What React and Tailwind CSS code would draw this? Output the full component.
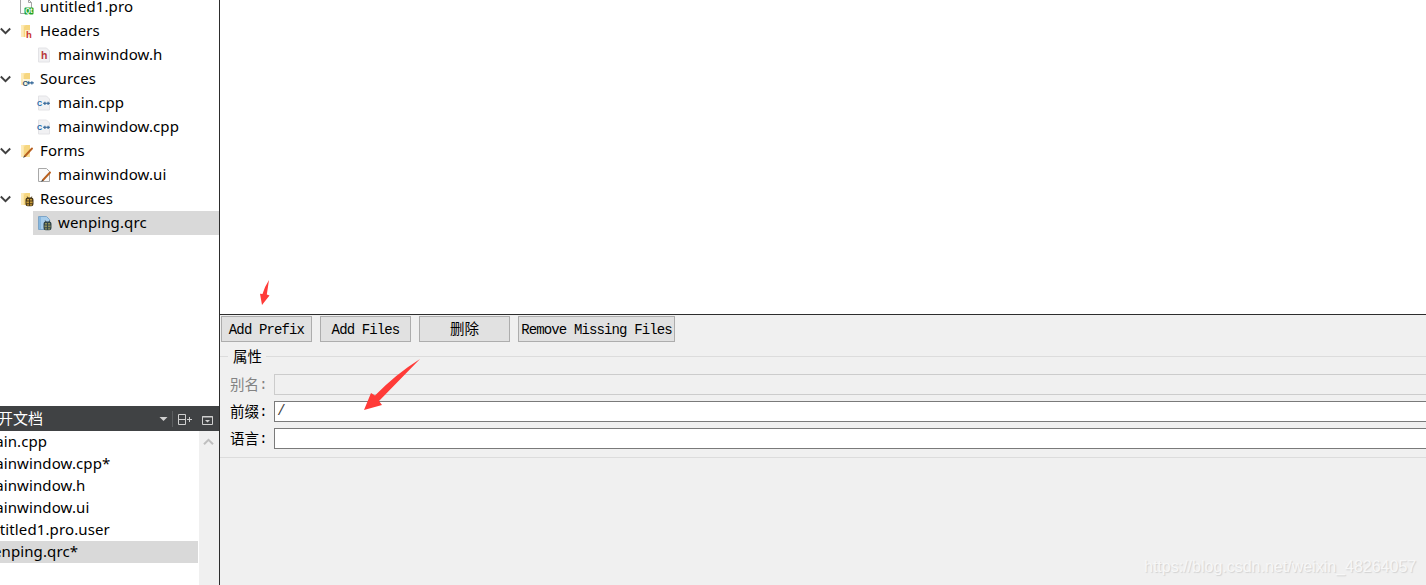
const folderBase = (
  <>
    <path d="M3 2h9v12H3z" fill="#fbe09a" />
    <path d="M3 2h2.5v12H3z" fill="#fdebb9" />
    <path d="M8 2h4v8l-4 4H6V4z" fill="#f6d67f" />
  </>
);

const pageBase = (
  <path d="M2.5 1h8l3 3v11h-11z" fill="#f1f1f3" stroke="#e3e3e6" />
);

const Globe = ({ dark, light }) => (
  <g>
    <path d="M10 7L9.3 5.6M13 7l.7-1.4" stroke={dark} />
    <rect x="7.5" y="6.5" width="8" height="8.7" rx="2.2" fill={dark} />
    <path d="M9 8h2v1.5H9zM12 8h2v1.5h-2zM8.5 10.5H11V12.2H8.5zM12 10.5h2.5v1.7H12zM9 13.2h2v1.2H9zM12 13.2h2v1.2h-2z" fill={light} />
  </g>
);

const Pencil = () => (
  <g fill="none" strokeLinecap="round">
    <path d="M7 13L14 5.5" stroke="#b8601f" strokeWidth="1.9" />
    <path d="M5.8 14.2l.9-.9" stroke="#4b4b4b" strokeWidth="1.1" />
  </g>
);

const Plusses = ({ x, y }) => (
  <path
    d={`M${x} ${y}h7M${x + 1.9} ${y - 1.6}v3.2M${x + 5.1} ${y - 1.6}v3.2`}
    stroke="#2a6094"
    strokeWidth="1.1"
    fill="none"
  />
);

const icons = {
  pro: (
    <>
      <path d="M2.5 .5h8l3 3v11h-11z" fill="#fcfcfc" stroke="#a5a5a5" />
      <path d="M10.5 .5v3h3" fill="none" stroke="#a5a5a5" />
      <rect x="6.5" y="8.5" width="9" height="7" rx="1" fill="#21a62c" />
      <text x="7.2" y="14" className="font-['Liberation_Sans'] text-[6.5px] font-bold" fill="#fff">Qt</text>
    </>
  ),
  headers: (
    <>
      {folderBase}
      <path d="M7 7h5v8H7z" fill="#fff" opacity="0.6" />
      <text x="8" y="14.5" className="font-['Liberation_Sans'] text-[9.5px] font-bold" fill="#cc3630">h</text>
    </>
  ),
  h: (
    <>
      {pageBase}
      <text x="5" y="12" className="font-['Liberation_Sans'] text-[10.5px] font-bold" fill="#b8353a">h</text>
    </>
  ),
  sources: (
    <>
      {folderBase}
      <path d="M5 8h7v7H5z" fill="#fff" opacity="0.7" />
      <text x="4.5" y="14.5" className="font-['Liberation_Sans'] text-[7.5px] font-bold" fill="#2e536f">C</text>
      <Plusses x={8.8} y={11.9} />
    </>
  ),
  cpp: (
    <>
      {pageBase}
      <text x="1" y="10.7" className="font-['Liberation_Sans'] text-[7px] font-bold" fill="#2169ab">C</text>
      <Plusses x={7} y={8.3} />
    </>
  ),
  forms: (
    <>
      {folderBase}
      <Pencil />
    </>
  ),
  ui: (
    <>
      <path d="M2.5 1.5h8l3 3v10h-11z" fill="#fafafa" stroke="#a8a8a8" />
      <Pencil />
    </>
  ),
  resources: (
    <>
      {folderBase}
      <Globe dark="#4c3a18" light="#c99c38" />
    </>
  ),
  qrc: (
    <>
      <path d="M2.5 1.5h8l3 3v10h-11z" fill="#a7cdeb" stroke="#7da5c8" />
      <path d="M3 2h2v12H3z" fill="#86b8e0" />
      <Globe dark="#34474a" light="#90915c" />
    </>
  ),
};

const treeItems = [
  { label: 'untitled1.pro', icon: 'pro' },
  { label: 'Headers', icon: 'headers', open: true },
  { label: 'mainwindow.h', icon: 'h', child: true },
  { label: 'Sources', icon: 'sources', open: true },
  { label: 'main.cpp', icon: 'cpp', child: true },
  { label: 'mainwindow.cpp', icon: 'cpp', child: true },
  { label: 'Forms', icon: 'forms', open: true },
  { label: 'mainwindow.ui', icon: 'ui', child: true },
  { label: 'Resources', icon: 'resources', open: true },
  { label: 'wenping.qrc', icon: 'qrc', child: true, selected: true },
];

const openDocuments = [
  { label: 'main.cpp' },
  { label: 'mainwindow.cpp*' },
  { label: 'mainwindow.h' },
  { label: 'mainwindow.ui' },
  { label: 'untitled1.pro.user' },
  { label: 'wenping.qrc*', selected: true },
];

const buttons = [
  { label: 'Add Prefix', width: 'w-[91px]' },
  { label: 'Add Files', width: 'w-[91px]' },
  { label: '删除', width: 'w-[91px]', cjk: true },
  { label: 'Remove Missing Files', width: 'w-[157px]' },
];

const fields = [
  { label: '别名', value: '', disabled: true },
  { label: '前缀', value: '/' },
  { label: '语言', value: '' },
];

const ProjectTree = () => (
  <div className="-mt-[5px] h-[411px] shrink-0">
    {treeItems.map((item) => (
      <div key={item.label} className="flex h-6">
        <div className={`flex shrink-0 items-center ${item.child ? 'w-[33px]' : 'w-[15px]'}`}>
          {item.open && (
            <svg width="12" height="12" viewBox="0 0 12 12">
              <path d="M0.8 3.5L5.5 8.1L10.2 3.5" fill="none" stroke="#404040" strokeWidth="1.9" />
            </svg>
          )}
        </div>
        <div className={`flex grow items-center pl-[3px] ${item.selected ? 'bg-[#d9d9d9]' : ''}`}>
          <svg width="16" height="16" viewBox="0 0 16 16" className="shrink-0">
            {icons[item.icon]}
          </svg>
          <span className="ml-[6px] h-6 leading-[22px]">{item.label}</span>
        </div>
      </div>
    ))}
  </div>
);

const OpenDocuments = () => (
  <div className="flex grow flex-col">
    <div className="flex h-[25px] shrink-0 items-center bg-[#404244]">
      <span className="-ml-[17px] h-[25px] w-[175px] shrink-0 font-['Noto_Sans_CJK_SC',sans-serif] text-[15px] leading-[24px] tracking-normal text-white">
        打开文档
      </span>
      <svg width="61" height="25" viewBox="0 0 61 25" fill="none" className="shrink-0">
        <path d="M1.5 11h8l-4 4z" fill="#d0d0d0" />
        <path d="M14.5 5v16" stroke="#5c5e60" />
        <path d="M20.5 8.5h7v10h-7zM20.5 13.5h7" stroke="#d0d0d0" />
        <path d="M29 13.5h5M31.5 11v5" stroke="#d0d0d0" />
        <path d="M44.5 10.5h10v8h-10zM44 11h11" stroke="#d0d0d0" />
        <path d="M47 14h5l-2.5 2.5z" fill="#d0d0d0" />
      </svg>
    </div>
    <div className="flex grow">
      <div className="w-[198px] overflow-hidden">
        {openDocuments.map((doc) => (
          <div key={doc.label} className={`h-[22px] leading-[20px] ${doc.selected ? 'bg-[#d9d9d9]' : ''}`}>
            <span className="-ml-[19px] whitespace-nowrap">{doc.label}</span>
          </div>
        ))}
      </div>
      <div className="ml-px w-5 bg-[#f0f0f0] pt-[7px] pl-1">
        <svg width="12" height="8" viewBox="0 0 12 8">
          <path d="M1 6.3L5.5 1.8L10 6.3" fill="none" stroke="#bfbfbf" strokeWidth="2" />
        </svg>
      </div>
    </div>
  </div>
);

const PropertiesGroup = () => (
  <div className="mt-[5px] flex h-[111px] flex-col border-b border-[#dcdcdc]">
    <div className="flex h-[18px] items-center">
      <span className="h-px w-2 bg-[#dcdcdc]" />
      <span className="w-[38px] pl-[5px] leading-[18px]">属性</span>
      <span className="h-px grow bg-[#dcdcdc]" />
    </div>
    <div className="mt-[9px] flex flex-col gap-[6px]">
      {fields.map((field) => (
        <div key={field.label} className="flex h-[21px]">
          <span
            className={`flex w-[54px] shrink-0 pl-[10px] leading-[19px] whitespace-nowrap ${
              field.disabled ? 'text-[#838383]' : 'text-black'
            }`}
          >
            {field.label}
            <span className="font-['Liberation_Mono',monospace] leading-[22px]">:</span>
          </span>
          <div
            className={`flex h-full grow items-center border border-r-0 pl-[2px] font-['Liberation_Mono',monospace] text-[#444] ${
              field.disabled ? 'border-[#cccccc] bg-[#f0f0f0]' : 'border-[#7a7a7a] bg-white'
            }`}
          >
            {field.value}
          </div>
        </div>
      ))}
    </div>
  </div>
);

export default function App() {
  return (
    <div className="relative flex h-[585px] w-[1426px] overflow-hidden bg-white text-black">
      <aside className="flex w-[220px] shrink-0 flex-col overflow-hidden border-r border-[#2d2d2d] font-['Noto_Sans',sans-serif] text-[15px] tracking-[0.12px]">
        <ProjectTree />
        <OpenDocuments />
      </aside>

      <main className="flex min-w-0 grow flex-col">
        <div className="h-[314px] shrink-0 bg-white" />
        <section className="flex grow flex-col border-t border-[#2d2d2d] bg-[#f0f0f0] font-['Noto_Sans_CJK_SC',sans-serif] text-[14.5px]">
          <div className="mt-px flex gap-2 pl-px">
            {buttons.map((button) => (
              <button
                key={button.label}
                className={`flex h-[26px] items-center justify-center border border-[#adadad] bg-[#e1e1e1] whitespace-nowrap ${button.width} ${
                  button.cjk
                    ? "pb-[2px] font-['Noto_Sans_CJK_SC',sans-serif] text-[14.5px]"
                    : "pt-[3px] font-['Liberation_Mono',monospace] text-[14px] tracking-[-0.87px]"
                }`}
              >
                {button.label}
              </button>
            ))}
          </div>
          <PropertiesGroup />
        </section>
      </main>

      {/* Pointer arrows */}
      <svg className="pointer-events-none absolute inset-0" width="1426" height="585" viewBox="0 0 1426 585">
        <path d="M269 280L266.8 294.5L269.5 295.5L262 305L260 293.8L262.5 294Q265 286 269 280Z" fill="#ff3b38" />
        <path d="M420 359L379 401L382 405L364 410L371 393L375 395.5Q396 374 420 359Z" fill="#ff3b38" />
      </svg>

      <span className="absolute top-[557px] left-[1144px] font-['Liberation_Sans',sans-serif] text-base leading-[20px] whitespace-nowrap text-[#f7f7f7] [text-shadow:1px_1px_1px_#d2d2d2]">
        https://blog.csdn.net/weixin_48264057
      </span>
    </div>
  );
}
